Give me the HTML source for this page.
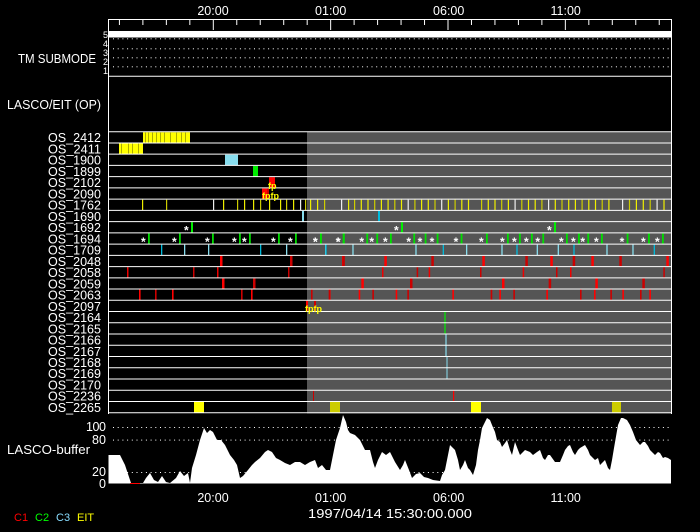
<!DOCTYPE html>
<html><head><meta charset="utf-8">
<style>
html,body{margin:0;padding:0;background:#000;width:700px;height:532px;overflow:hidden}
svg{display:block}
text{font-family:"Liberation Sans",sans-serif;fill:#fff}
</style></head><body>
<svg id="s" width="700" height="532" viewBox="0 0 700 532" xmlns="http://www.w3.org/2000/svg">
<rect width="700" height="532" fill="#000"/>
<rect x="307" y="132" width="364" height="281.5" fill="#555"/>
<g id="g"></g>
<g font-size="12.5">
<text x="213" y="15" text-anchor="middle">20:00</text>
<text x="330.7" y="15" text-anchor="middle">01:00</text>
<text x="448.7" y="15" text-anchor="middle">06:00</text>
<text x="565.7" y="15" text-anchor="middle">11:00</text>
<text x="213" y="502" text-anchor="middle">20:00</text>
<text x="330.7" y="502" text-anchor="middle">01:00</text>
<text x="448.7" y="502" text-anchor="middle">06:00</text>
<text x="565.7" y="502" text-anchor="middle">11:00</text>
<text x="390" y="518" text-anchor="middle" textLength="164" lengthAdjust="spacingAndGlyphs">1997/04/14 15:30:00.000</text>
<text x="18" y="63" textLength="78" lengthAdjust="spacingAndGlyphs">TM SUBMODE</text>
<text x="7" y="109" textLength="94" lengthAdjust="spacingAndGlyphs">LASCO/EIT (OP)</text>
<text x="7" y="454" textLength="83" lengthAdjust="spacingAndGlyphs">LASCO-buffer</text>
<text x="86" y="431" textLength="20">100</text>
<text x="92" y="444" textLength="14">80</text>
<text x="92" y="476" textLength="14">20</text>
<text x="99" y="488">0</text>
</g>
<g font-size="9">
<text x="103" y="38">5</text><text x="103" y="47">4</text><text x="103" y="56">3</text><text x="103" y="65">2</text><text x="103" y="74">1</text>
</g>
<g font-size="11">
<text x="14" y="521" style="fill:#f00">C1</text>
<text x="35" y="521" style="fill:#0f0">C2</text>
<text x="56" y="521" style="fill:#8df">C3</text>
<text x="77" y="521" style="fill:#ff0">EIT</text>
</g>
<g id="labels" font-size="12.5"></g>
<g font-size="9" style="font-weight:bold">
<text x="268" y="189" style="fill:#ff0">fp</text>
<text x="262" y="199" style="fill:#ff0">fpfp</text>
<text x="305" y="312" style="fill:#ff0">fpfp</text>
</g>
</svg>
<script>
const NS="http://www.w3.org/2000/svg",g=document.getElementById('g');
function el(t,a,p){const e=document.createElementNS(NS,t);for(const k in a)e.setAttribute(k,a[k]);(p||g).appendChild(e);return e}
function R(x,y,w,h,c){el('rect',{x,y,width:w,height:h,fill:c})}
function L(x1,y1,x2,y2,c,w){el('line',{x1,y1,x2,y2,stroke:c,'stroke-width':w||1})}
const top0=131.7,rh=11.24;
const ry=i=>top0+i*rh;
L(108.5,19.5,671.5,19.5,'#fff');L(108.5,19,108.5,414,'#fff');L(671.5,19,671.5,414,'#fff');
for(let k=-4;k<30;k++){const x=213.3+k*23.47;if(x<109||x>671)continue;const maj=(k%5===0);L(x,19.5,x,maj?30:25,'#fff');}
R(108.5,31,563,6.5,'#fff');
[38.3,48.3,57.3,66.3].forEach(y=>{for(let x=113;x<670;x+=4.7)R(x,y,1,1,'#fff')});
L(108.5,76.3,671.5,76.3,'#fff');
[427,439.6,472].forEach(y=>{for(let x=113;x<670;x+=4.7)R(x,y,1,1,'#fff')});
const names=['2412','2411','1900','1899','2102','2090','1762','1690','1692','1694','1709','2048','2058','2059','2063','2097','2164','2165','2166','2167','2168','2169','2170','2236','2265'];
const lg=document.getElementById('labels');
names.forEach((n,i)=>{const t=el('text',{x:101,y:ry(i)+10.5,'text-anchor':'end',textLength:53,lengthAdjust:'spacingAndGlyphs'},lg);t.textContent='OS_'+n;});
const r=(i,x,w,c)=>R(x,ry(i)+0.5,w,rh-0.5,c);
r(0,143,47,'#ff0');[145,148,152,156,160,164,170,176,181,185].forEach(x=>r(0,x,1,'#aa0'));
r(1,119,24,'#ff0');[121,128,132,138].forEach(x=>r(1,x,1,'#aa0'));
r(2,225,13,'#8de');r(3,253,5,'#0e0');r(4,269,6,'#f00');r(5,262,5,'#f00');r(5,267,2,'#c00');
let y6=[142,166,213,223,237,244,253,260,269,280,286,293,300,305,310,317,324,341,348];
for(let x=354;x<468;x+=6.7)y6.push(x);for(let x=481;x<609;x+=6.7)y6.push(x);for(let x=622;x<670;x+=6.9)y6.push(x);
y6.forEach((x,k)=>r(6,x,1.2,k%3==1?'#cc0':(k%5==2?'#eee':'#ee0')));
r(7,302,2,'#8de');r(7,378,2,'#0bd');
const star=(i,x)=>{const t=el('text',{x:x-7,y:ry(i)+13,'font-size':12,style:'fill:#fff;font-weight:bold'});t.textContent='*';};
[191,401,554].forEach(x=>{r(8,x,2,'#0e0');star(8,x)});
const g9=[148,179,212,239,249,278,295,320,343].concat([60,128,199,229,270,340,374,410,482,558,621,657,693,727,798,834,862,903,980,1044,1086].map(p=>300+p/3));
g9.forEach(x=>{r(9,x,1.8,'#0d0');star(9,x)});
[161,184,208,260,286,325].concat([76,157,346,428,498,604,649,710,773,820,919,997,1061].map(p=>300+p/3)).forEach((x,k)=>r(10,x,1.3,k%3?'#8de':'#0bd'));
[220,290,342].concat([127,253,394,547,676,751,818,874,958,1099].map(p=>300+p/3)).forEach((x,k)=>r(11,x,2.5,k%2?'#c00':'#f00'));
[127,193,217,288].concat([246,350,386,540,668,768,810,1090].map(p=>300+p/3)).forEach((x,k)=>r(12,x,1.5,k%2?'#c00':'#e00'));
[222,253].concat([184,330,606,746,886,1027].map(p=>300+p/3)).forEach((x,k)=>r(13,x,2.5,k%2?'#c00':'#f00'));
[139,155,172,241,251,311,329].concat([86,176,217,287,322,457,572,598,640,739,840,882,931,967,1020,1048].map(p=>300+p/3)).forEach((x,k)=>r(14,x,1.6,k%2?'#c00':'#f00'));
r(15,306,2,'#f00');r(15,314,2,'#c00');
L(445,ry(16),445,ry(18),'#0e0',1.2);L(446,ry(18),446,ry(20),'#8de',1.2);L(447,ry(20),447,ry(22),'#8de',1);
r(23,313,1,'#c00');r(23,453,1.2,'#f00');
r(24,194,10,'#ff0');r(24,330,10,'#cc0');r(24,471,10,'#ff0');r(24,612,9,'#cc0');
for(let i=0;i<=25;i++)L(108.5,ry(i),671.5,ry(i),'#fff',1);
const pts=[[108.5,455],[120,455],[125,465],[131,483],[143,483],[146,478],[150,473],[154,480],[158,482],[162,476],[166,482],[170,483],[176,478],[180,471],[184,476],[188,473],[190,483],[192,468],[196,455],[200,440],[204,428],[207,433],[210,430],[213,432],[217,440],[221,440],[225,445],[230,455],[234,460],[237,465],[240,478],[243,476],[248,470],[252,465],[255,462],[260,458],[265,452],[268,450],[272,452],[276,458],[280,460],[285,463],[290,465],[295,462],[300,462],[305,465],[310,462],[315,460],[318,468],[322,465],[326,470],[330,470],[333,455],[336,440],[340,428],[343,415],[346,422],[348,430],[350,433],[355,435],[360,440],[365,450],[370,450],[373,462],[375,468],[378,460],[382,452],[386,455],[390,452],[395,462],[400,470],[403,465],[405,460],[409,470],[412,478],[416,474],[420,473],[424,477],[428,478],[433,480],[440,481],[442,475],[445,470],[448,455],[450,445],[453,448],[455,450],[458,460],[460,470],[463,465],[465,460],[468,468],[470,470],[473,475],[476,465],[478,450],[480,440],[482,428],[485,422],[487,418],[490,420],[492,425],[495,432],[497,440],[500,442],[502,447],[505,443],[507,440],[510,450],[512,455],[515,442],[518,450],[520,455],[525,450],[530,452],[533,455],[537,452],[540,450],[543,458],[545,460],[548,455],[550,455],[555,462],[560,462],[563,455],[565,450],[568,446],[570,445],[573,452],[575,455],[578,450],[580,448],[585,445],[588,450],[590,455],[595,460],[598,458],[600,465],[603,462],[605,460],[608,468],[610,470],[612,460],[614,448],[618,425],[621,418],[623,418],[627,420],[630,425],[633,432],[636,440],[640,445],[643,442],[645,442],[648,446],[650,450],[653,453],[655,455],[658,452],[660,453],[663,458],[665,457],[668,458],[671,460],[671,483.5],[108.5,483.5]];
el('polygon',{points:pts.map(p=>p.join(',')).join(' '),fill:'#fff'});
R(130,483,10,1,'#f00');
</script>
</body></html>
